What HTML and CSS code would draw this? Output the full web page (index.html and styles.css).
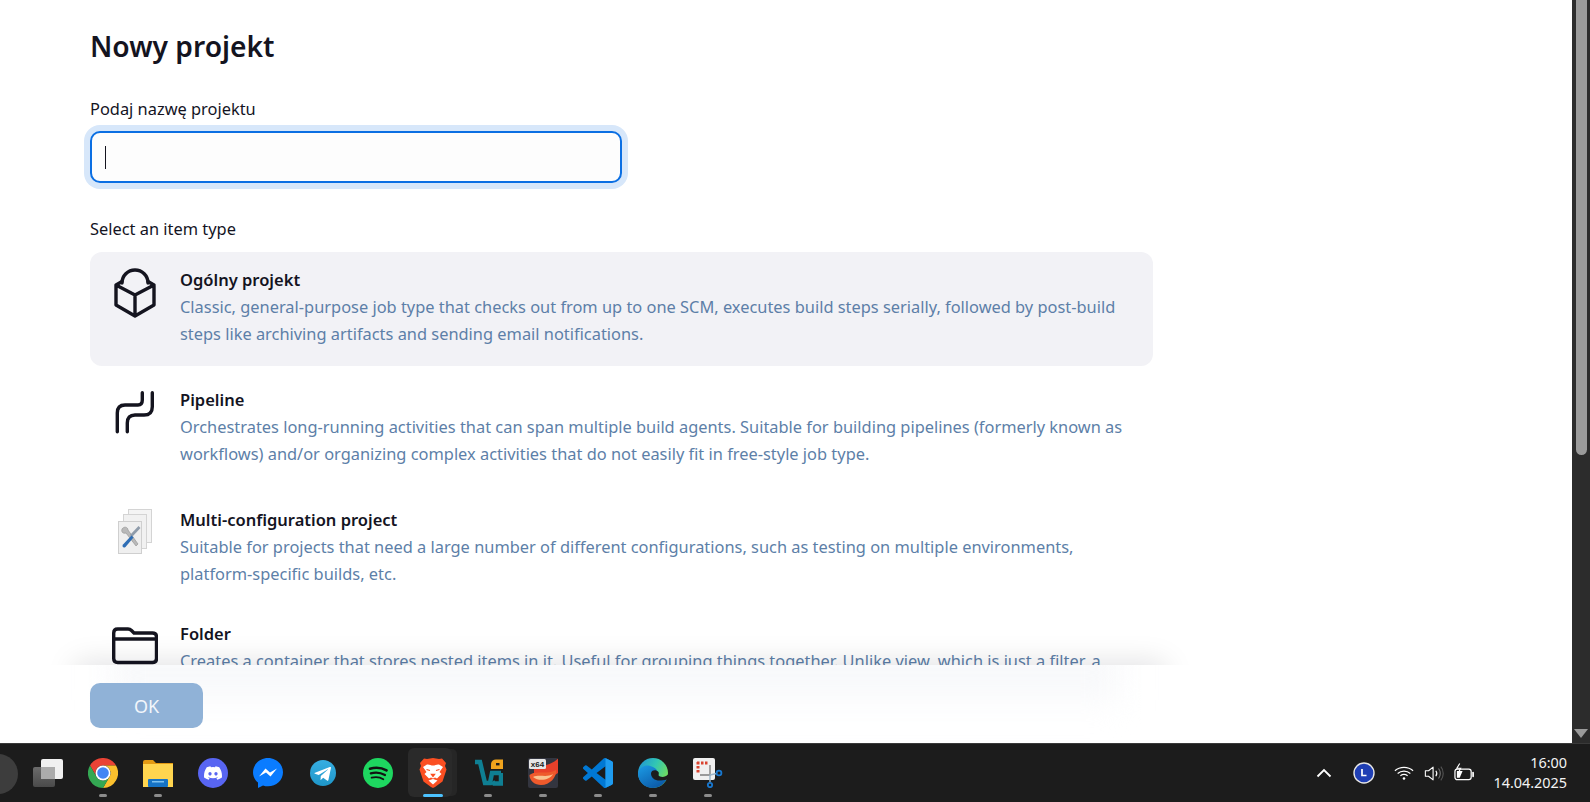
FILE: index.html
```html
<!DOCTYPE html>
<html lang="pl">
<head>
<meta charset="utf-8">
<title>Nowy projekt</title>
<link rel="stylesheet" href="styles.css">
</head>
<body>
<div class="window">
  <div class="page">
    <main class="scroll">
      <h1 class="title">Nowy projekt</h1>
      <label class="label name-label">Podaj nazwę projektu</label>
      <div class="input"><span class="caret"></span></div>
      <div class="label type-label">Select an item type</div>
      <ul class="items">
        <li class="item selected">
          <svg class="item-icon" viewBox="0 0 48 56" fill="none" stroke="#14141f" stroke-width="3.4" stroke-linejoin="round" stroke-linecap="round">
            <path d="M6 21L12 17.5M38 17.5L44 21V41L25 52L6 41V21L25 31L44 21M25 31V52"/>
            <path d="M12 19A13 13 0 0 1 38 19"/>
          </svg>
          <div class="item-text">
            <div class="item-title">Ogólny projekt</div>
            <div class="item-desc">Classic, general-purpose job type that checks out from up to one SCM, executes build steps serially, followed by post-build steps like archiving artifacts and sending email notifications.</div>
          </div>
        </li>
        <li class="item">
          <svg class="item-icon" viewBox="0 0 48 56" fill="none" stroke="#14141f" stroke-width="3.4" stroke-linecap="round">
            <path d="M32.3 8.7V16Q32.3 21 28 21H15Q7.3 21 7.3 29V47.7"/>
            <path d="M42.3 8.7V22.7Q42.3 31 34 31H25Q17.3 31 17.3 39V47.7"/>
          </svg>
          <div class="item-text">
            <div class="item-title">Pipeline</div>
            <div class="item-desc">Orchestrates long-running activities that can span multiple build agents. Suitable for building pipelines (formerly known as workflows) and/or organizing complex activities that do not easily fit in free-style job type.</div>
          </div>
        </li>
        <li class="item item-short">
          <svg class="item-icon" viewBox="0 0 48 56">
            <rect x="18.5" y="5.5" width="23" height="33" fill="#f4f4f4" stroke="#d4d4d4"/>
            <rect x="13.5" y="10.5" width="23" height="34" fill="#f1f1f1" stroke="#d4d4d4"/>
            <rect x="8.5" y="17.5" width="23" height="32" fill="#efefef" stroke="#cfcfcf"/>
            <path d="M12 25C14 22 18 23 18 26L28 40L26 42L16 29C13 30 11 28 12 25Z" fill="#b9b9b9" stroke="#8f8f8f" stroke-width=".6"/>
            <path d="M28.5 22L30.5 24L22 33L20 31Z" fill="#8f9cab"/>
            <path d="M21.5 31.5L23.5 33.5L15.5 43C13.5 44.5 11.5 42.5 13 40.5Z" fill="#2f6eb5"/>
          </svg>
          <div class="item-text">
            <div class="item-title">Multi-configuration project</div>
            <div class="item-desc">Suitable for projects that need a large number of different configurations, such as testing on multiple environments, platform-specific builds, etc.</div>
          </div>
        </li>
        <li class="item">
          <svg class="item-icon" viewBox="0 0 48 56" fill="none" stroke="#14141f" stroke-width="3.4" stroke-linejoin="round">
            <path d="M3.7 15Q3.7 11 7.7 11H18Q20 11 21.5 12.5L24 15H42.5Q46.5 15 46.5 19V40.5Q46.5 44.5 42.5 44.5H7.7Q3.7 44.5 3.7 40.5Z"/>
            <path d="M3.7 21H46.5"/>
          </svg>
          <div class="item-text">
            <div class="item-title">Folder</div>
            <div class="item-desc">Creates a container that stores nested items in it. Useful for grouping things together. Unlike view, which is just a filter, a folder creates a separate namespace, so you can have multiple things of the same name.</div>
          </div>
        </li>
      </ul>
      <div class="sticker-shadow"></div>
    </main>
    <footer class="footer">
      <button class="ok" type="button">OK</button>
    </footer>
  </div>
  <div class="scrollbar">
    <div class="thumb"></div>
    <div class="arrow"></div>
  </div>
</div>

<div class="taskbar">
  <div class="apps">
    <svg class="start" viewBox="0 0 20 44"><circle cx="-2" cy="22" r="20" fill="#3d3d3d"/></svg>
    <div class="app">
      <svg class="icon" viewBox="0 0 30 30"><defs><linearGradient id="tv" x1="0" y1="0" x2="0" y2="1"><stop offset="0" stop-color="#6b6b6b"/><stop offset="1" stop-color="#4a4a4a"/></linearGradient></defs><rect x="0" y="9" width="22" height="20" rx="2" fill="url(#tv)"/><rect x="8" y="1" width="22" height="20" rx="2" fill="#f0f0f0"/><rect x="8" y="9" width="14" height="12" fill="#ababab"/></svg>
    </div>
    <div class="app running">
      <svg class="icon" viewBox="0 0 30 30"><path d="M2 7.5A15 15 0 0 1 28 7.5H15A7.5 7.5 0 0 0 8.5 18.75Z" fill="#ea4335"/><path d="M28 7.5A15 15 0 0 1 15 30L21.5 18.75A7.5 7.5 0 0 0 15 7.5Z" fill="#fbc02d"/><path d="M15 30A15 15 0 0 1 2 7.5L8.5 18.75A7.5 7.5 0 0 0 21.5 18.75Z" fill="#34a853"/><circle cx="15" cy="15" r="7.5" fill="#fff"/><circle cx="15" cy="15" r="5.8" fill="#4285f4"/></svg>
      <span class="dot"></span>
    </div>
    <div class="app running">
      <svg class="icon" viewBox="0 0 30 30"><path d="M0 4Q0 2 2 2H10L13 5H30V29H0Z" fill="#e39a13"/><path d="M0 6H30V29H0Z" fill="#ffd54f"/><rect x="5" y="21" width="20" height="8" rx="1" fill="#1673c5"/><rect x="9" y="23" width="12" height="1.5" fill="#7cc1f0"/></svg>
      <span class="dot"></span>
    </div>
    <div class="app">
      <svg class="icon" viewBox="0 0 30 30"><circle cx="15" cy="15" r="15" fill="#5865f2"/><svg x="6" y="8" width="18" height="14" viewBox="0 0 127.14 96.36"><path fill="#fff" d="M107.7,8.07A105.15,105.15,0,0,0,81.47,0a72.06,72.06,0,0,0-3.36,6.83A97.68,97.68,0,0,0,49,6.83,72.37,72.37,0,0,0,45.64,0,105.89,105.89,0,0,0,19.39,8.09C2.79,32.65-1.71,56.6.54,80.21h0A105.73,105.73,0,0,0,32.71,96.36,77.7,77.7,0,0,0,39.6,85.25a68.42,68.42,0,0,1-10.85-5.18c.91-.66,1.8-1.34,2.66-2a75.57,75.57,0,0,0,64.32,0c.87.71,1.76,1.39,2.66,2a68.68,68.68,0,0,1-10.87,5.19,77,77,0,0,0,6.89,11.1A105.25,105.25,0,0,0,126.6,80.22h0C129.24,52.84,122.09,29.11,107.7,8.07ZM42.45,65.69C36.18,65.69,31,60,31,53s5-12.74,11.43-12.74S54,46,53.89,53,48.84,65.69,42.45,65.69Zm42.24,0C78.41,65.69,73.25,60,73.25,53s5-12.74,11.44-12.74S96.23,46,96.12,53,91.08,65.69,84.69,65.69Z"/></svg></svg>
    </div>
    <div class="app">
      <svg class="icon" viewBox="0 0 30 30"><path d="M15 0C6.7 0 0 6.3 0 14.2C0 18.4 1.9 22.1 5 24.6V30L10 27.4C11.6 28 13.3 28.3 15 28.3C23.3 28.3 30 22 30 14.2C30 6.3 23.3 0 15 0Z" fill="#0a7cff"/><path d="M6 18.5L12.5 10.5L17 14.5L24 10.5L17.5 18.5L13 14.5Z" fill="#fff"/></svg>
    </div>
    <div class="app">
      <svg class="icon" viewBox="0 0 30 30"><defs><linearGradient id="tg" x1="0" y1="0" x2="0" y2="1"><stop offset="0" stop-color="#37aee2"/><stop offset="1" stop-color="#1e96c8"/></linearGradient></defs><circle cx="15" cy="15" r="13" fill="url(#tg)"/><path d="M7 14.8L21.8 9C22.6 8.7 23.2 9.2 22.9 10.3L20.4 21.9C20.2 22.8 19.7 23 19 22.6L15.2 19.8L13.3 21.6C13.1 21.8 12.9 22 12.5 22L12.8 18L20 11.6C20.3 11.3 19.9 11.2 19.5 11.4L10.7 17L7 15.8C6.2 15.6 6.2 15.1 7 14.8Z" fill="#fff"/></svg>
    </div>
    <div class="app">
      <svg class="icon" viewBox="0 0 30 30"><circle cx="15" cy="15" r="15" fill="#1ed760"/><g fill="none" stroke="#121212" stroke-linecap="round"><path d="M7 10.7C12 9.3 18.5 9.6 23.5 12.4" stroke-width="2.7"/><path d="M7.8 15.4C12 14.2 17.6 14.6 22 17" stroke-width="2.2"/><path d="M8.6 19.7C12.2 18.8 16.8 19 20.3 21.2" stroke-width="1.8"/></g></svg>
    </div>
    <div class="app active">
      <svg class="icon" viewBox="0 0 30 30"><path d="M15 0L21 1L24 .5L28 5L27 8L28.5 11.5L24.5 23.5L17 29L15 30L13 29L5.5 23.5L1.5 11.5L3 8L2 5L6 .5L9 1Z" fill="#fb4f22"/><path d="M15 7.5C13 7.5 11 6 9 6.5L5 9L8.5 14L6.5 16L11 20.5L13 19.5L15 20.5L17 19.5L19 20.5L23.5 16L21.5 14L25 9L21 6.5C19 6 17 7.5 15 7.5Z" fill="#fff"/><path d="M10.5 22.5L15 21L19.5 22.5L15 26.5Z" fill="#fff"/><path d="M8.5 11.5L12 12.5M21.5 11.5L18 12.5M13.5 16.5H16.5L15 18.5Z" stroke="#fb4f22" stroke-width="1.3" fill="#fb4f22"/></svg>
      <span class="dot live"></span>
    </div>
    <div class="app running">
      <svg class="icon" viewBox="0 0 30 30"><path d="M2 4H7L12 25H17L19 15H28" fill="none" stroke="#0f7f93" stroke-width="4.5"/><path d="M19.5 23.5L21 25.5H28V15" fill="none" stroke="#0f7f93" stroke-width="4.5"/><path d="M18 11V7Q18 1.5 23 1.5H30V11Z" fill="#efa31d"/><rect x="23" y="5" width="3.5" height="2.4" fill="#1c1c1c"/></svg>
      <span class="dot"></span>
    </div>
    <div class="app running">
      <svg class="icon" viewBox="0 0 30 30"><rect width="30" height="30" rx="2" fill="#33353f"/><path d="M6 9C16 9 26 5 30 .5V15C24 20 12 19 6 15Z" fill="#e8402a"/><path d="M1.5 17C8 12 20 17 28 12C29 19 22 27 13 27C7 27 1.5 23 1.5 17Z" fill="#ee5a2c"/><path d="M5 19C11 16 19 20 25 16C22 22 11 24 5 19Z" fill="#f8c28f"/><rect x="1" y="1" width="17" height="10" rx="1.5" fill="#e6e6e6"/><text class="x64" x="9.5" y="9">x64</text></svg>
      <span class="dot"></span>
    </div>
    <div class="app running">
      <svg class="icon" viewBox="0 0 100 100"><path fill="#0078d4" d="M96.46 10.8L75.86.87a6.23 6.23 0 0 0-7.1 1.2L29.35 38.1 12.19 25.06a4.16 4.16 0 0 0-5.32.24L1.36 30.3a4.17 4.17 0 0 0 0 6.16L16.24 50 1.36 63.54a4.17 4.17 0 0 0 0 6.16l5.5 5a4.16 4.16 0 0 0 5.32.24l17.16-13.04 39.41 36.03a6.22 6.22 0 0 0 7.1 1.2l20.6-9.91A6.25 6.25 0 0 0 100 83.58V16.42a6.25 6.25 0 0 0-3.54-5.62zM75 72.7 45.1 50 75 27.3z"/><path fill="#1f9cf0" d="M75 .3a6.2 6.2 0 0 1 .86.57l20.6 9.93A6.25 6.25 0 0 1 100 16.42v67.16a6.25 6.25 0 0 1-3.54 5.62l-20.6 9.91a6.2 6.2 0 0 1-.86.4z"/></svg>
      <span class="dot"></span>
    </div>
    <div class="app running">
      <svg class="icon" viewBox="0 0 30 30"><defs><linearGradient id="eg" x1="0" y1="0" x2="1" y2=".5"><stop offset="0" stop-color="#1f8fd8"/><stop offset=".55" stop-color="#31c6b4"/><stop offset="1" stop-color="#6fdc60"/></linearGradient><linearGradient id="eb" x1="0" y1="0" x2=".7" y2="1"><stop offset="0" stop-color="#1c9ce6"/><stop offset="1" stop-color="#0b58a6"/></linearGradient></defs><circle cx="15" cy="15" r="15" fill="url(#eg)"/><path d="M0 15C2 7 10 6 15 9C20 11 21 16 18 20H29C27 26 21 30 15 30C7 30 0 24 0 15Z" fill="url(#eb)"/><path d="M13 15.5C13 12 18 11 20.5 14C21.5 16 19.5 17.5 22 18.5C25 19.5 28 18.5 30 16.5V21.5L23 22.5C17 23 13 20 13 15.5Z" fill="#1c1c1c"/></svg>
      <span class="dot"></span>
    </div>
    <div class="app running">
      <svg class="icon" viewBox="0 0 30 30"><rect width="22" height="22" rx="2" fill="#f0f0f0"/><path d="M4 5H15M5 4V15" stroke="#d9432f" stroke-width="3" stroke-dasharray="2.5 1.5" fill="none"/><path d="M17 7V17H7" stroke="#9a9a9a" stroke-width="1.8" fill="none"/><path d="M17 17L17 24M17 17L23.5 15.5" stroke="#9ab4c8" stroke-width="1.4" fill="none"/><circle cx="17" cy="27" r="2.2" fill="none" stroke="#1878d0" stroke-width="1.8"/><circle cx="26" cy="15" r="2.4" fill="none" stroke="#1878d0" stroke-width="1.8"/></svg>
      <span class="dot"></span>
    </div>
  </div>
  <div class="tray">
    <svg class="tray-chevron" viewBox="0 0 16 10" fill="none" stroke="#fff" stroke-width="1.8"><path d="M1.5 8.5L8 2L14.5 8.5"/></svg>
    <svg class="tray-account" viewBox="0 0 22 22"><circle cx="11" cy="11" r="10" fill="#1f3fb5" stroke="#e6e6e6" stroke-width="1.4"/><path d="M9 7V13.5H13.5" fill="none" stroke="#fff" stroke-width="1.7"/></svg>
    <svg class="tray-wifi" viewBox="0 0 22 16" fill="none" stroke="#fff" stroke-width="1.3"><path d="M1 5.5C6.5 .5 15.5 .5 21 5.5M4 8.5C8 5 14 5 18 8.5M7 11C9.5 9.2 12.5 9.2 15 11"/><circle cx="11" cy="14" r="1.4" fill="#fff" stroke="none"/></svg>
    <svg class="tray-volume" viewBox="0 0 22 18" fill="none" stroke-width="1.2"><path d="M1.5 6H5L10 2V16L5 12H1.5Z" stroke="#fff" stroke-linejoin="round"/><path d="M13 6C14.3 7.7 14.3 10.3 13 12" stroke="#fff"/><path d="M16 3.5C18.5 6.5 18.5 11.5 16 14.5" stroke="#777"/><path d="M18.5 1.5C22 5.5 22 12.5 18.5 16.5" stroke="#555"/></svg>
    <svg class="tray-battery" viewBox="0 0 22 20" fill="none" stroke="#fff" stroke-width="1.3"><rect x="1" y="6" width="17" height="11" rx="2.5"/><path d="M20 9.5V13.5" stroke-width="1.8" stroke-linecap="round"/><path d="M3 15V8H9L6 15Z" fill="#fff" stroke="none"/><path d="M6 0L3 5H7L5 9" stroke-width="1.2"/></svg>
    <div class="clock">
      <div>16:00</div>
      <div>14.04.2025</div>
    </div>
  </div>
</div>
</body>
</html>
```

FILE: styles.css
```css
* { box-sizing: border-box; }
html, body { margin: 0; padding: 0; height: 100%; }
body {
  width: 1590px;
  height: 802px;
  overflow: hidden;
  display: flex;
  flex-direction: column;
  background: #fff;
  font-family: "Noto Sans", "Open Sans", sans-serif;
  color: #14141f;
}

.window { display: flex; height: 743px; }
.page { flex: 1; display: flex; flex-direction: column; min-width: 0; }

.scroll {
  position: relative;
  height: 665px;
  overflow: hidden;
  padding: 26px 0 0 90px;
}
.title {
  margin: 0;
  font-size: 28.2px;
  line-height: 40px;
  font-weight: 600;
  color: #14141f;
}
.label { display: block; font-size: 16.4px; line-height: 24px; color: #14141f; }
.name-label { margin-top: 31px; }
.input {
  width: 532px;
  height: 52px;
  margin-top: 10px;
  padding: 13px 0 0 13px;
  background: #fdfdfd;
  border: 2px solid #0b6fe3;
  border-radius: 10px;
  box-shadow: 0 0 0 6px #d7e7fa;
}
.caret { display: block; width: 1px; height: 23px; background: #14141f; }
.type-label { margin-top: 34px; }

.items {
  list-style: none;
  margin: 11px 0 0;
  padding: 0;
  width: 1063px;
  display: flex;
  flex-direction: column;
  gap: 6px;
}
.item {
  display: flex;
  padding: 14px 20px 19px;
  border-radius: 12px;
}
.item-short { padding-bottom: 13px; }
.selected { background: #f2f2f6; }
.item-icon {
  flex: none;
  width: 48px;
  height: 56px;
  margin: -2px 22px 0 0;
}
.item-text { flex: 1; min-width: 0; }
.item-title { font-size: 16.5px; line-height: 27px; font-weight: 600; color: #14141f; }
.item-desc { font-size: 16.4px; line-height: 27px; color: #5d7fa8; }

.sticker-shadow {
  position: absolute;
  left: 75px;
  width: 1090px;
  bottom: -30px;
  height: 30px;
  box-shadow: 0 -2px 30px rgba(0, 0, 20, .13);
}

.footer {
  position: relative;
  flex: 1;
  padding: 18px 0 0 90px;
  overflow: hidden;
}
.footer::before {
  content: "";
  position: absolute;
  left: 110px;
  width: 1010px;
  top: -20px;
  height: 55px;
  background: #f8f9fb;
  filter: blur(16px);
}
.ok {
  position: relative;
  display: block;
  width: 113px;
  height: 45px;
  padding: 0;
  border: 0;
  border-radius: 10px;
  background: #90b2d7;
  color: #f2f6fb;
  font: 400 18px "Noto Sans", "Open Sans", sans-serif;
}

.scrollbar {
  flex: none;
  width: 18px;
  height: 743px;
  background: #2c2c2c;
  display: flex;
  flex-direction: column;
  justify-content: space-between;
  align-items: center;
  padding-bottom: 5px;
}
.thumb { width: 11px; height: 455px; background: #9b9b9b; border-radius: 0 0 6px 6px; }
.arrow {
  width: 0;
  height: 0;
  border-left: 7px solid transparent;
  border-right: 7px solid transparent;
  border-top: 9px solid #9b9b9b;
}

.taskbar {
  flex: none;
  height: 59px;
  background: #1c1c1c;
  border-top: 1px solid #3a3a3a;
  display: flex;
  justify-content: space-between;
}
.apps { display: flex; }
.start { display: block; width: 20px; height: 44px; margin: 8px 0 0 0; flex: none; }
.app {
  position: relative;
  width: 55px;
  display: flex;
  flex-direction: column;
  align-items: center;
  padding-top: 14px;
}
.icon { display: block; width: 30px; height: 30px; flex: none; }
.dot { display: block; width: 8px; height: 3px; margin-top: 6px; border-radius: 2px; background: #8b8b8b; }
.dot.live { width: 20px; background: #4cc2ff; }
.active::before {
  content: "";
  position: absolute;
  top: 4px;
  bottom: 5px;
  left: 3px;
  right: 8px;
  background: #2a2a2a;
  border-radius: 6px;
  box-shadow: 6px 0 0 -1px #262626;
}
.active > * { position: relative; }
.x64 { font: 700 8px "Liberation Sans", sans-serif; fill: #222; text-anchor: middle; }

.tray { display: flex; align-items: center; padding-right: 23px; }
.tray svg { display: block; flex: none; }
.tray-chevron { width: 16px; height: 10px; margin-right: 21px; }
.tray-account { width: 22px; height: 22px; margin-right: 19px; }
.tray-wifi { width: 20px; height: 16px; margin-right: 10px; }
.tray-volume { width: 20px; height: 17px; margin-right: 10px; }
.tray-battery { width: 21px; height: 20px; margin-right: 18px; }
.clock { text-align: right; color: #f3f3f3; font-size: 14.4px; line-height: 20px; }
```
